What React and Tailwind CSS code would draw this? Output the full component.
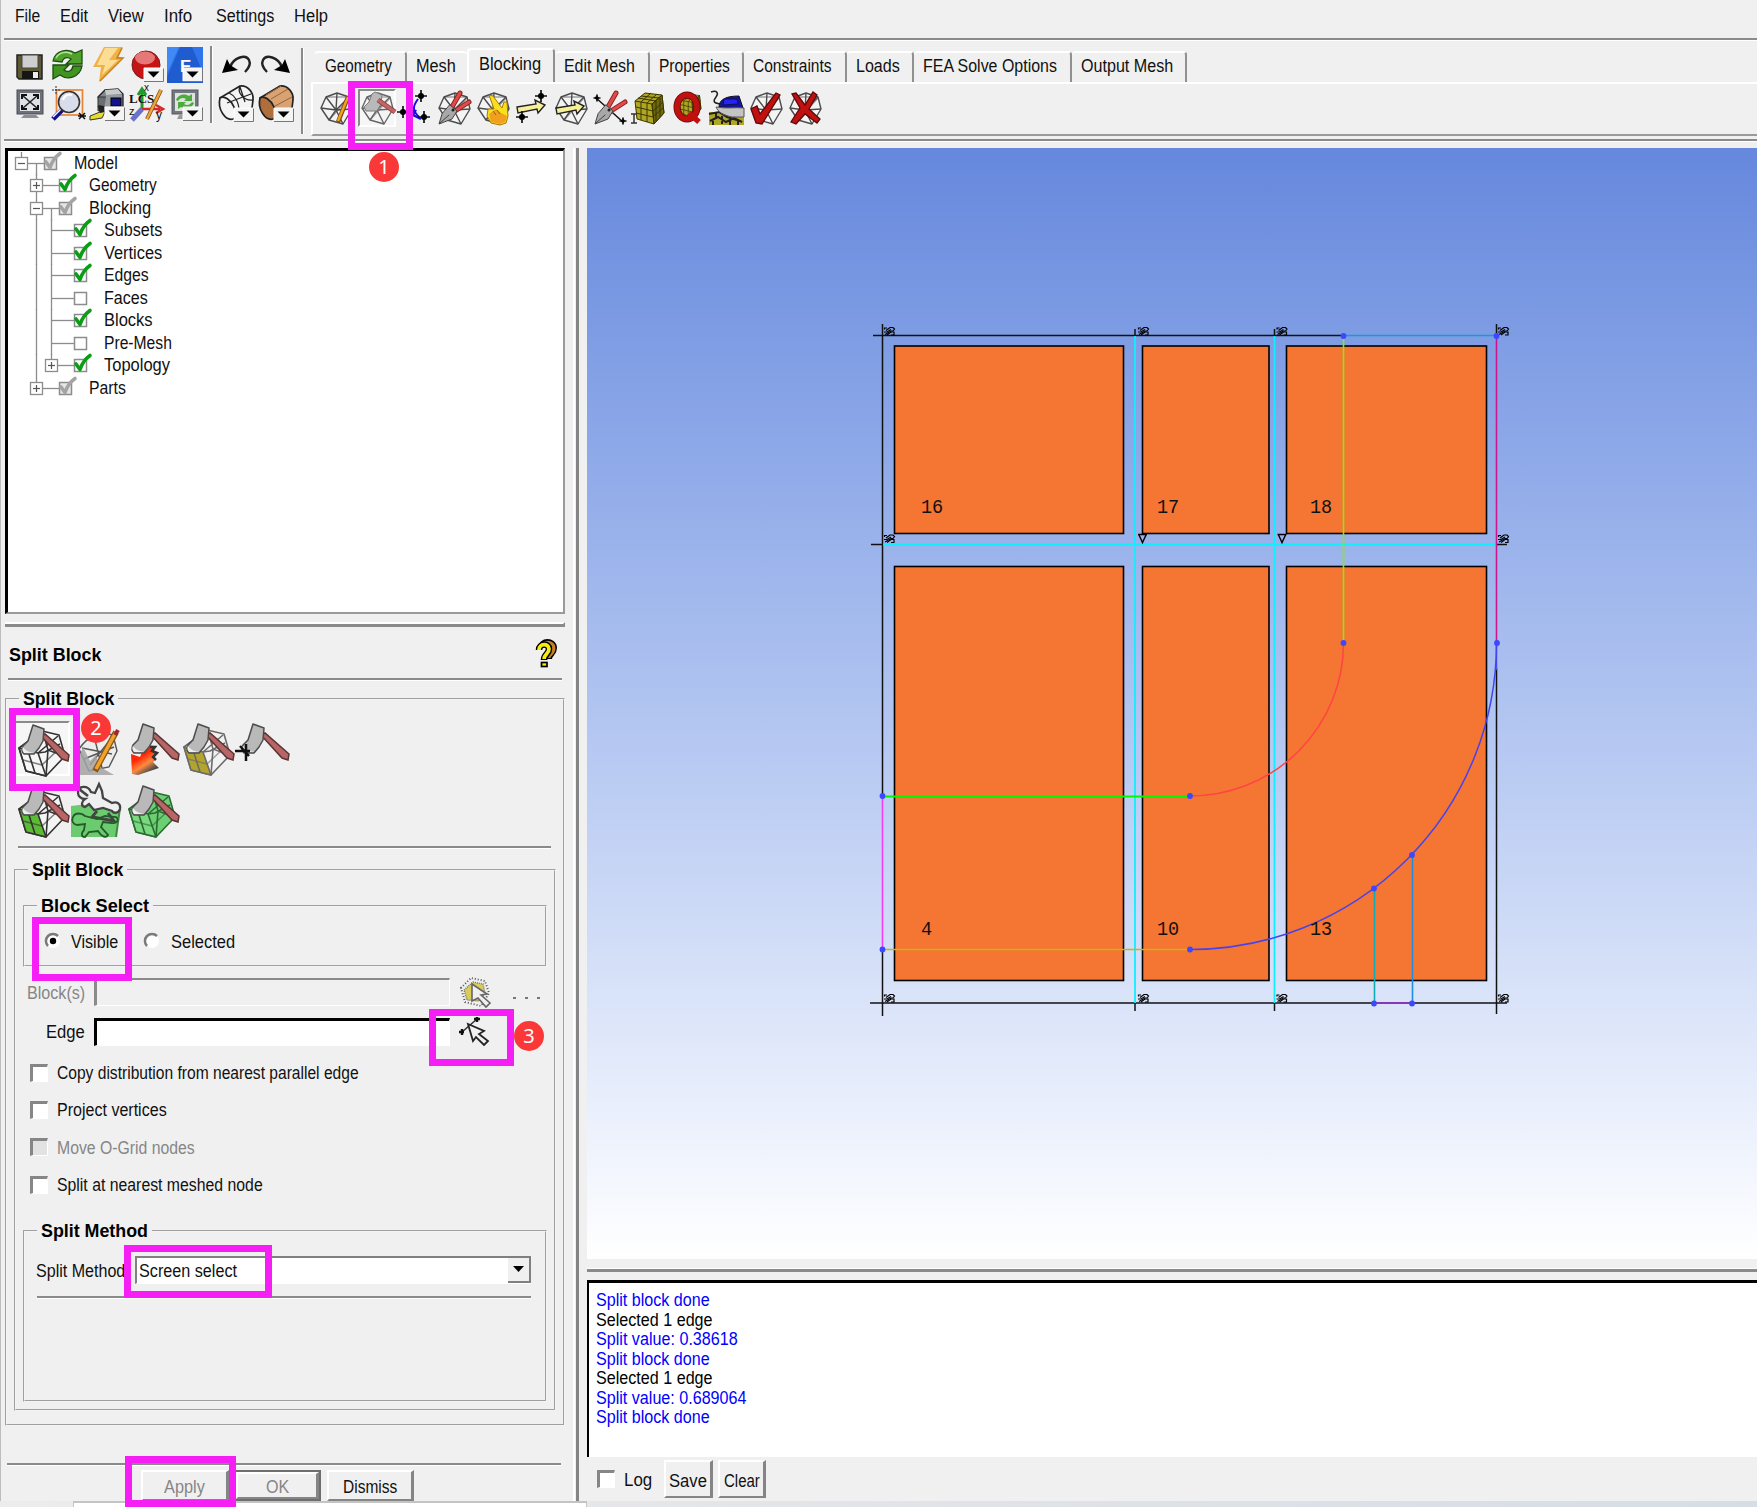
import React, { useLayoutEffect, useRef, useState } from "react";

/* Text squeezed horizontally to the narrow proportions of the UI face. */
function Fit({ w, dy = 1, children, className = "" }) {
  const ref = useRef(null);
  const [scale, setScale] = useState(1);
  useLayoutEffect(() => {
    const natural = ref.current.offsetWidth;
    if (natural) setScale(w / natural);
  }, [w, children]);
  return (
    <span className="inline-block shrink-0 leading-none" style={{ width: w }}>
      <span
        ref={ref}
        className={"inline-block origin-left whitespace-nowrap leading-none " + className}
        style={{ transform: `translateY(${dy}px) scaleX(${scale})` }}
      >
        {children}
      </span>
    </span>
  );
}

function Rule({ className = "" }) {
  return <div className={"h-[3px] shrink-0 border-t-2 border-b border-t-[#8a8a8a] border-b-white " + className} />;
}

function Svg({ w, h, children, className = "" }) {
  return (
    <svg width={w} height={h} viewBox={`0 0 ${w} ${h}`} className={"block shrink-0 overflow-visible " + className} fill="none">
      {children}
    </svg>
  );
}

/* ---------- main toolbar icons, 36 x 36 ---------- */

function Drop({ x = 16, y = 21 }) {
  return (
    <g>
      <rect x={x} y={y} width="19" height="13" fill="#f4f4f4" />
      <path d={`M${x} ${y + 13.5}h19.5v-13`} stroke="#777" />
      <path d={`M${x} ${y + 13}v-13h19`} stroke="#fff" />
      <path d={`M${x + 3.5} ${y + 3.5}h12l-6 6z`} fill="#000" />
    </g>
  );
}

const SaveIcon = () => (
  <Svg w={36} h={36}>
    <path d="M6 8h25v24H8l-2-2z" fill="#5d5a33" stroke="#222" strokeWidth="1.5" />
    <rect x="11" y="8" width="16" height="13" fill="#cfcfcf" stroke="#444" />
    <rect x="11" y="24" width="17" height="8" fill="#151515" />
    <rect x="22" y="25" width="5" height="6" fill="#eee" />
  </Svg>
);
const RefreshIcon = () => (
  <Svg w={36} h={36}>
    <path d="M3 14C5 3 18 1 25 6l7-3v14H16l5-5c-4-3-8-1-9 3z" fill="#4fa32b" stroke="#1d4d10" strokeWidth="1.3" />
    <path d="M32 19C30 30 18 34 10 28l-7 4V18h16l-5 5c4 3 8 1 9-4z" fill="#3f9422" stroke="#1d4d10" strokeWidth="1.3" />
    <path d="M6 11C9 5 17 4 22 7" stroke="#b6e79a" strokeWidth="1.5" />
  </Svg>
);
const BoltIcon = () => (
  <Svg w={36} h={36}>
    <path d="M15 0h19l-5 10h5L10 35l2-15H4z" fill="#efb244" />
    <path d="M16 1h13l-9 12h9L13 28l3-10H8z" fill="#fbdd95" />
    <path d="M33 1l-5 10h6L11 34" stroke="#c87f1c" strokeWidth="1.5" />
  </Svg>
);
const StopIcon = () => (
  <Svg w={36} h={36}>
    <circle cx="18" cy="18" r="14" fill="#c41414" stroke="#7d1a1a" />
    <ellipse cx="17" cy="11" rx="10" ry="6.5" fill="#e87878" />
    <Drop />
  </Svg>
);
const EIcon = () => (
  <Svg w={36} h={36}>
    <rect width="36" height="36" fill="#2f74ea" />
    <path d="M13 0h12l11 26v10H0V30z" fill="#1f5cd0" />
    <path d="M0 0h12L0 26z" fill="#4189f5" />
    <text x="13" y="25" fontSize="17" fontWeight="bold" fill="#fff" fontFamily="Liberation Sans, sans-serif">E</text>
    <Drop />
  </Svg>
);
const FitIcon = () => (
  <Svg w={36} h={36}>
    <rect x="6" y="4" width="26" height="24" fill="#6c7078" stroke="#4a4d52" />
    <rect x="9" y="7" width="20" height="18" fill="#dfe2e6" />
    <path d="M12 10l14 12M26 10L12 22" stroke="#222" strokeWidth="1.600" />
    <path d="M11 13V9h5M22 9h5v4M27 19v4h-5M16 23h-5v-4" stroke="#111" strokeWidth="2" />
    <path d="M13 29h12l3 3H10z" fill="#8b8d90" />
  </Svg>
);
const ZoomIcon = () => (
  <Svg w={36} h={36}>
    <rect x="6.500" y="4" width="26" height="25" stroke="#e98436" strokeWidth="1.7" />
    <path d="M2 4h9M6 0v8" stroke="#333" strokeDasharray="2 1" />
    <path d="M12 24L3 33" stroke="#10108c" strokeWidth="5" />
    <path d="M11 23L3 31" stroke="#fff" strokeWidth="1.5" />
    <circle cx="19" cy="16" r="10.500" fill="#d9dcea" stroke="#333" strokeWidth="1.6" />
    <path d="M13 14c1-5 6-6 9-5" stroke="#fff" strokeWidth="2" />
    <path d="M29 27l6 6M35 27l-6 6M28 30h8" stroke="#111" strokeWidth="1.5" />
  </Svg>
);
const CameraIcon = () => (
  <Svg w={36} h={36}>
    <path d="M9 11l7-7 13-1 5 5v18H14z" fill="#85898e" stroke="#222" strokeWidth="1.3" />
    <path d="M16 4l13-1 4 5-16 1z" fill="#c7cacd" />
    <path d="M9 11h8v11l-8 3z" fill="#6a6d71" stroke="#333" />
    <path d="M17 9h16v16H15z" fill="#979a9e" />
    <rect x="22" y="12" width="10" height="8" fill="#12128a" stroke="#000" />
    <path d="M9 20l2 6-10 4v4l12-2 3-6" fill="#e6de26" stroke="#333" />
    <path d="M9 19l6 1 1 6-5 1z" fill="#222" />
    <Drop />
  </Svg>
);
const LcsIcon = () => (
  <Svg w={36} h={36}>
    <path d="M14 24V4M10 9l4-6 4 6" stroke="#1f9a2b" strokeWidth="3" />
    <path d="M14 23h18M28 19l7 4-7 4" stroke="#d02a2a" strokeWidth="2.500" />
    <path d="M14 23L4 34" stroke="#6b72c9" strokeWidth="5" />
    <path d="M33 4L19 33" stroke="#7a4a10" strokeWidth="4" />
    <path d="M33 4L19 33" stroke="#f0a63a" strokeWidth="2.500" />
    <text x="1" y="17" fontSize="13" fontWeight="bold" fill="#111" fontFamily="Liberation Serif, serif">LCS</text>
    <text x="16" y="5" fontSize="10" fill="#111" fontFamily="Liberation Sans, sans-serif">x</text>
    <text x="1" y="29" fontSize="11" fill="#111" fontFamily="Liberation Sans, sans-serif">z</text>
    <text x="28" y="33" fontSize="12" fill="#111" fontFamily="Liberation Sans, sans-serif">y</text>
  </Svg>
);
const MonitorIcon = () => (
  <Svg w={36} h={36}>
    <rect x="5" y="4" width="26" height="24" fill="#73777e" stroke="#55585d" />
    <rect x="8" y="7" width="20" height="18" fill="#dfe3e0" />
    <path d="M9 14c3-7 10-6 13-4l3-2v7h-8l2-2c-3-2-6-1-8 2zM27 17c-3 7-10 6-13 4l-3 2v-7h8l-2 2c3 2 6 1 8-2z" fill="#4dab3e" />
    <path d="M12 29h10l2 4H10z" fill="#999" />
    <Drop />
  </Svg>
);
const UndoIcon = ({ flip }) => (
  <Svg w={36} h={36}>
    <g transform={flip ? "translate(34 0) scale(-1 1)" : undefined}>
      <path d="M11 20C15 10 27 7 30 13c2 4 0 8-4 12" stroke="#222" strokeWidth="2.400" />
      <path d="M3 26l5-14 3 6 8 5z" fill="#000" />
    </g>
  </Svg>
);
const CylinderIcon = ({ solid }) => (
  <Svg w={36} h={36}>
    <path d="M1 12L21 0c7-1 14 6 13 14l-1 8-17 12z" fill={solid ? "#d9a273" : "#f4f4f4"} stroke="#222" strokeWidth="1.700" strokeLinejoin="round" />
    <path d="M1 12c4-3 11 2 14 9 3 6 2 12-1 12C7 35-2 24 1 12z" fill={solid ? "#b06e3c" : "#f4f4f4"} stroke="#222" strokeWidth="1.700" />
    {solid ? (
      <path d="M7 9L22 0M12 13L29 3M16 20l17-9" stroke="#9a6436" />
    ) : (
      <path d="M21 0c-3 6 3 15 13 14M10 7c5 2 10 8 10 18M8 17l24-9M21 1l5 15" stroke="#222" strokeWidth="1.3" />
    )}
    <Drop x={15} y={22} />
  </Svg>
);

/* ---------- blocking tab icons, 36 x 38 ---------- */

const Wire = ({ c = "#4c4c4c" }) => (
  <g stroke={c} strokeWidth="1.4" strokeLinejoin="round">
    <path d="M7 8L18 4l12 4 3 12-9 15-14-4L2 19z" fill="#f4f4f4" />
    <path d="M2 19l15 2L7 8M17 21L30 8M17 21l7 14M17 21l-7 10M33 20l-16 1M18 4l-1 17" />
    <path d="M7 8l23 0M10 31l20-22" opacity=".5" />
  </g>
);
const Star = ({ x, y, s = 6 }) => (
  <g>
    <path d={`M${x - s} ${y}h${2 * s}M${x} ${y - s}v${2 * s}`} stroke="#111" strokeWidth="1.7" />
    <circle cx={x} cy={y} r={s * 0.5} fill="#000" />
  </g>
);
const Pliers = () => (
  <g strokeLinecap="round">
    <path d="M15 18L23 4" stroke="#8f2020" strokeWidth="5" />
    <path d="M15 18L23 4" stroke="#e24a4a" strokeWidth="3" />
    <path d="M18 22l14-9" stroke="#8f2020" strokeWidth="5" />
    <path d="M18 22l14-9" stroke="#e24a4a" strokeWidth="3" />
    <path d="M13 16l7 6-5 8-13 5 3-10z" fill="#a8a8a8" stroke="#444" />
    <path d="M3 34l9-8" stroke="#444" />
    <circle cx="16" cy="21" r="1.500" fill="#222" />
  </g>
);
const Arrow = ({ y = 0 }) => (
  <path d={`M2 ${16 + y}l19-3-1-4 10 5-7 8-1-4-19 4z`} fill="#f6f09a" stroke="#222" strokeWidth="1.4" />
);
const Mesh = ({ s }) => (
  <g stroke="#3b3700" strokeWidth="1" transform={s}>
    <path d="M3 12l10-8 17 2 2 18-10 11-17-5z" fill="#b0a624" />
    <path d="M20 15L30 6l2 18-10 11z" fill="#6f680f" />
    <path d="M3 12l17 3L30 6M20 15l2 20M9 13v18M15 14v19M4 18l17 4 10-9M4 24l17 4 11-10M24 12v20M28 9v19M9 7l18 2M6 9l18 3M19 4L9 13M25 5l-10 9" />
  </g>
);

const tabIcons = [
  <Svg w={36} h={38}><Wire /><path d="M29 8L19 33" stroke="#7a4a10" strokeWidth="4.500" /><path d="M29 8L19 32" stroke="#f3a21c" strokeWidth="2.500" /></Svg>,
  <Svg w={36} h={38} className="-mt-[2px]">
    <Wire c="#666" />
    <path d="M12 5l3-2 7 3-1 9-4 7H6l-2-4 5-5z" fill="#b9b9b9" stroke="#7a7a7a" />
    <path d="M18 11l17 12" stroke="#8d4a4a" strokeWidth="5" />
    <path d="M18 11l17 12" stroke="#c96464" strokeWidth="3" />
  </Svg>,
  <Svg w={36} h={38}>
    <path d="M20 10c-6 8-5 12 1 18" stroke="#1010e0" strokeWidth="2" />
    <path d="M8 21l9 1-2 4 8 4" stroke="#1010e0" strokeWidth="2.500" />
    <Star x={23} y={7} /><Star x={26} y={28} /><Star x={5} y={23} />
  </Svg>,
  <Svg w={36} h={38}><Wire /><Pliers /></Svg>,
  <Svg w={36} h={38}>
    <Wire />
    <path d="M13 6l4 1 9 12 2-6h3l1 14-2 7-6 2-9-2-4-7 1-7h6z" fill="#f8e01e" stroke="#a87800" />
    <path d="M13 25l7-5 5 4 6 3-2 6-5 2-9-2z" fill="#f0a01e" />
    <path d="M17 22l3 4M21 21l3 4" stroke="#9c6408" />
  </Svg>,
  <Svg w={36} h={38}><Arrow y={2} /><Star x={26} y={7} /><Star x={7} y={28} /></Svg>,
  <Svg w={36} h={38}><Wire /><Arrow y={3} /></Svg>,
  <Svg w={36} h={38}><path d="M2 8l28 25" stroke="#111" strokeWidth="1.500" /><Star x={4} y={9} s={3.5} /><Star x={30} y={32} s={3.5} /><Pliers /></Svg>,
  <Svg w={36} h={38}><Mesh /><path d="M-1 25h6M2 25v9M-1 34h6" stroke="#333" strokeWidth="1.500" /></Svg>,
  <Svg w={36} h={38}><Mesh s="translate(6 2) scale(.75)" /><ellipse cx="16" cy="18" rx="10" ry="12" stroke="#5e0808" strokeWidth="7" /><ellipse cx="16" cy="18" rx="10" ry="12" stroke="#c01010" strokeWidth="5.500" /><path d="M18 24l10 9" stroke="#c01010" strokeWidth="5.500" /></Svg>,
  <Svg w={36} h={38}>
    <path d="M-1 23h28l7 5v8H-1z" fill="#b0a624" />
    <path d="M-1 25l10-2 8 5 10 3M0 32l8-4 8 5 8-4 8 4M6 23v5M3 30v6M12 27v8M20 28v8M28 30v6" stroke="#222" strokeWidth="2" />
    <path d="M1 3c6-2 8 1 5 5s-3 6 4 7" stroke="#222" strokeWidth="1.500" />
    <path d="M9 18c0-8 8-11 20-11l4 12z" fill="#14149c" stroke="#111" />
    <path d="M14 10h13l1 5-15 1z" fill="#2424f4" stroke="#101050" />
    <path d="M6 18c10 2 19 0 28 1v9H22C13 26 8 23 6 18z" fill="#c4c4c4" stroke="#555" />
  </Svg>,
  <Svg w={36} h={38}><Wire /><path d="M2 20l6-3 3 8L27 4l4 2-18 29-6-1z" fill="#c01010" stroke="#5e0808" strokeWidth="1.300" /></Svg>,
  <Svg w={36} h={38}><Wire /><path d="M4 5l4-1 9 12 8-13 4 3-8 14 11 10-3 4-12-9-9 10-5-2 9-14z" fill="#c01010" stroke="#5e0808" strokeWidth="1.300" /></Svg>,
];

/* ---------- split block tool icons, 55 x 56 ---------- */

const Axe = () => (
  <g>
    <path d="M26 14l4-2 24 21-1 6-6-2z" fill="#b76565" stroke="#5a3434" strokeWidth="1.500" />
    <path d="M18 3l11 4-1 12-4 7-5 6H9c-3-3-2-6-1-8l5-5z" fill="#b9b9b9" stroke="#4c4c4c" strokeWidth="1.500" strokeLinejoin="round" />
    <path d="M9 31c-2-2-2-5-1-6 2 3 5 5 11 6z" fill="#ededed" />
  </g>
);
const Cube = ({ fill = "none", front = "none", c = "#333" }) => (
  <g stroke={c} strokeWidth="1.600" strokeLinejoin="round">
    <path d="M4 26l7 23 20 5 19-20-6-21-17-4z" fill={fill} />
    <path d="M4 26l19 5 8 23-20-5z" fill={front} />
    <path d="M13 29l7 22M23 31l20-17M23 31l7-1 15-8M28 10l5 18 16 6M33 28L31 54" />
    <path d="M8 38l19 5 19-18" opacity=".6" />
  </g>
);

const toolIcons = {
  wire: <Svg w={55} h={56} className="-mt-[1px]"><Cube fill="#f6f6f6" /><Axe /></Svg>,
  pencil: (
    <Svg w={55} h={56}>
      <path d="M9 28c8-12 20-18 34-14l4 16-8 16-20 4z" fill="#ededed" stroke="#555" strokeWidth="1.400" />
      <path d="M12 27l30 6M24 15l8 32M44 14L20 44M14 38l30-12" stroke="#555" strokeWidth="1.400" />
      <path d="M9 54V36l4-10 7 14 6-6 4 12 14 8z" fill="#a3a3a3" opacity=".85" />
      <path d="M46 11L25 50" stroke="#8a5414" strokeWidth="6" />
      <path d="M46 11L26 48" stroke="#f2a32b" strokeWidth="3.500" />
      <path d="M48 9l-3 5" stroke="#a02a2a" strokeWidth="4" />
    </Svg>
  ),
  arrow: (
    <Svg w={55} h={56}>
      <defs>
        <linearGradient id="heat" x1="0" y1="0" x2=".6" y2="1">
          <stop offset="0" stopColor="#ff1800" />
          <stop offset=".45" stopColor="#ff2a08" />
          <stop offset=".7" stopColor="#ff8a40" />
          <stop offset=".95" stopColor="#4a4a4a" />
        </linearGradient>
      </defs>
      <path d="M20 24l10 1-2 4 4 2-4 4 3 3-3 3 6 6-21 7-6-1-1-20 9 3z" fill="url(#heat)" />
      <path d="M25 26l5 0-3 4 5 2-4 4 3 3" stroke="#333" strokeWidth="2.500" />
      <Axe />
    </Svg>
  ),
  olive: <Svg w={55} h={56}><Cube fill="#f2f2f2" front="#b3a52c" c="#6b6b6b" /><Axe /></Svg>,
  point: <Svg w={55} h={56}><Axe /><path d="M0 30h15M11 23v17M5 25l9 10" stroke="#111" strokeWidth="2.500" /></Svg>,
  green: <Svg w={55} h={56} className="-ml-[1px]"><Cube fill="#f4f4f4" front="#5cbb35" /><Axe /></Svg>,
  cookie: (
    <Svg w={55} h={56}>
      <path d="M1 23l8-1h38l3 4-4 28H1z" fill="#6bcb6f" />
      <path d="M47 22l3 3-4 29" stroke="#3e8b42" strokeWidth="2" />
      <path d="M8 10c0-8 10-8 13-1l4 1 4-9 3 7 1 7 9 5c5-2 9 1 8 6-1 4-6 5-8 2l-9-3-9 2-5-6-4 3c-5-1-3-6 0-8-4 0-7-3-7-6z" fill="#efefef" stroke="#444" strokeWidth="2.300" />
      <path d="M9 6l9 7M38 30l6 8-16-3-6-1 5-6" stroke="#444" strokeWidth="2.800" />
      <path d="M3 34c2-5 9-4 12-1l12 3 8-3 11 1c4 3 0 7-4 6l-9-1-2 5 7 8c-2 4-7 1-10-4l-9 1-4 5c-4 0-4-4-1-7l1-6-8 1c-4-1-6-4-4-8z" stroke="#245c28" strokeWidth="1.800" />
    </Svg>
  ),
  solid: <Svg w={55} h={56}><Cube fill="#6ccf72" front="#79d97e" c="#2c6a33" /><Axe /></Svg>,
};

/* ---------- model tree ---------- */

const GRAY = "#8c8c8c";

function Toggle({ x, open }) {
  return (
    <g>
      <rect x={x - 6} y="5.500" width="12" height="12" fill="#fff" stroke={GRAY} strokeWidth="1.3" />
      <path d={`M${x - 3.5} 11.500h7`} stroke="#555" strokeWidth="1.2" />
      {!open && <path d={`M${x} 8v7`} stroke="#555" strokeWidth="1.2" />}
    </g>
  );
}

function TreeRow({ depth, name, w, box, check, lines = [], last }) {
  const bx = 36 + depth * 15;
  const tx = 13.5 + depth * 15;
  return (
    <div className="flex h-[22.5px] items-center">
      <Svg w={bx + 30} h={23}>
        {lines.map((x, i) => (
          <path key={i} d={`M${x} 0v23`} stroke={GRAY} strokeWidth="1.300" />
        ))}
        {last && <path d={`M${last} 0v12`} stroke={GRAY} strokeWidth="1.300" />}
        <path d={`M${tx} 11.500H${bx}`} stroke={GRAY} strokeWidth="1.300" />
        {box === "open" && <path d={`M${tx + 15} 11.500v12`} stroke={GRAY} strokeWidth="1.300" />}
        {box && <Toggle x={tx} open={box === "open"} />}
        <rect x={bx + 0.5} y="5.500" width="12" height="12" fill={check === "part" ? "#e6e6e6" : "#fff"} stroke={GRAY} strokeWidth="1.5" />
        {check && (
          <path
            d={`M${bx + 2} 10l4 5.500q3-9 10-14`}
            stroke={check === "on" ? "#0b9d16" : "#a4a4a4"}
            strokeWidth="3.600"
            strokeLinecap="round"
            strokeLinejoin="round"
          />
        )}
      </Svg>
      <Fit w={w} dy={0}>{name}</Fit>
    </div>
  );
}

function Tree() {
  return (
    <div className="mt-[5px] h-[466px] w-[560px] shrink-0 border-t-[3px] border-r-2 border-b-2 border-l-[3px] border-t-black border-r-[#9a9a9a] border-b-[#9a9a9a] border-l-black bg-white pt-[1px]">
      <TreeRow depth={0} name="Model" w={44} box="open" check="part" last={13.5} />
      <TreeRow depth={1} name="Geometry" w={68} box="closed" check="on" lines={[28.5]} />
      <TreeRow depth={1} name="Blocking" w={62} box="open" check="part" lines={[28.5]} />
      <TreeRow depth={2} name="Subsets" w={58} check="on" lines={[28.5, 43.5]} />
      <TreeRow depth={2} name="Vertices" w={58} check="on" lines={[28.5, 43.5]} />
      <TreeRow depth={2} name="Edges" w={45} check="on" lines={[28.5, 43.5]} />
      <TreeRow depth={2} name="Faces" w={44} lines={[28.5, 43.5]} />
      <TreeRow depth={2} name="Blocks" w={49} check="on" lines={[28.5, 43.5]} />
      <TreeRow depth={2} name="Pre-Mesh" w={68} lines={[28.5, 43.5]} />
      <TreeRow depth={2} name="Topology" w={66} box="closed" check="on" lines={[28.5]} last={43.5} />
      <TreeRow depth={1} name="Parts" w={37} box="closed" check="part" last={28.5} />
    </div>
  );
}

/* ---------- form controls ---------- */

function Group({ title, w, className, children }) {
  return (
    <fieldset className={"shrink-0 border-2 border-[#f4f4f4] [border-style:groove] " + className}>
      <legend className="ml-[12px] flex h-5 items-center px-1">
        <Fit w={w} className="font-bold text-black">{title}</Fit>
      </legend>
      {children}
    </fieldset>
  );
}

function Box({ disabled }) {
  return (
    <span
      className={
        "block size-[18px] shrink-0 border-t-[3px] border-r border-b border-l-[3px] border-t-[#868686] border-r-white border-b-white border-l-[#868686] " +
        (disabled ? "bg-[#e2e2e2]" : "bg-white")
      }
    />
  );
}

function Check({ label, w, disabled }) {
  return (
    <div className="flex h-[37.4px] items-center">
      <Box disabled={disabled} />
      <span className={"ml-[9px] flex items-center " + (disabled ? "text-[#868686]" : "")}>
        <Fit w={w}>{label}</Fit>
      </span>
    </div>
  );
}

function Radio({ on }) {
  return (
    <Svg w={16} h={18} className="relative -top-[1px]">
      <circle cx="8" cy="9" r="7" fill="#fff" />
      <path d="M3 14A7 7 0 0 1 13 4" stroke="#7a7a7a" strokeWidth="2.500" />
      {on && <circle cx="8" cy="9" r="3.200" fill="#000" />}
    </Svg>
  );
}

function Button({ label, w, dy, className }) {
  return (
    <button
      type="button"
      className={"flex shrink-0 items-center justify-center border-t-2 border-r-[3px] border-b-2 border-l-2 border-t-white border-r-[#858585] border-b-[#858585] border-l-white " + className}
    >
      <Fit w={w} dy={dy}>{label}</Fit>
    </button>
  );
}

/* ---------- panels ---------- */

const tabs = [
  ["Geometry", 67, "w-[93px] pl-[11px]"],
  ["Mesh", 40, "w-[60px] pl-[9px]"],
  ["Blocking", 62, "w-[88px] pl-[10px]"],
  ["Edit Mesh", 71, "w-[95px] pl-[9px]"],
  ["Properties", 71, "w-[94px] pl-[9px]"],
  ["Constraints", 79, "w-[103px] pl-[9px]"],
  ["Loads", 44, "w-[67px] pl-[9px]"],
  ["FEA Solve Options", 134, "w-[158px] pl-[9px]"],
  ["Output Mesh", 92, "w-[115px] pl-[9px]"],
];

function Tabs() {
  return (
    <div className="ml-[8px] flex flex-1 flex-col pt-[7px]">
      <div className="ml-[3px] flex h-[34px] items-end">
        {tabs.map(([name, w, cls]) => {
          const active = name === "Blocking";
          return (
            <div
              key={name}
              className={
                "flex shrink-0 items-center rounded-t-[4px] border-t-2 border-t-white " +
                cls +
                (active ? " h-[34px] border-r-2 border-l-2 border-r-[#909090] border-l-white pb-[4px]" : " h-[31px] pb-[3px]") +
                (name === "Mesh" ? "" : " border-r-2 border-r-[#909090]")
              }
            >
              <Fit w={w}>{name}</Fit>
            </div>
          );
        })}
      </div>
      <div className="flex h-[54px] items-center gap-[3px] border-t-2 border-b-2 border-l-2 border-t-white border-b-[#9a9a9a] border-l-white pb-[2px] pl-[6px]">
        {tabIcons.map((icon, i) => (
          <div
            key={i}
            className={
              i === 1
                ? "-mr-[1px] flex h-[38px] w-[38px] shrink-0 border-t-2 border-r-2 border-b-2 border-l-2 border-t-[#8a8a8a] border-r-white border-b-white border-l-[#8a8a8a] bg-[#f6f6f6]"
                : "w-[36px] shrink-0"
            }
          >
            {icon}
          </div>
        ))}
      </div>
    </div>
  );
}

const menus = [
  ["File", 25, "ml-[15px]"],
  ["Edit", 28, "ml-[20px]"],
  ["View", 36, "ml-[20px]"],
  ["Info", 28, "ml-[20px]"],
  ["Settings", 58, "ml-[24px]"],
  ["Help", 34, "ml-[20px]"],
];

function Header() {
  return (
    <div className="flex h-[142px] shrink-0 flex-col">
      <div className="flex h-[38px] shrink-0 items-center pb-[7px]">
        {menus.map(([name, w, cls]) => (
          <div key={name} className={"flex " + cls}>
            <Fit w={w}>{name}</Fit>
          </div>
        ))}
      </div>
      <Rule className="ml-[4px]" />
      <div className="flex h-[98px] shrink-0">
        <div className="ml-[11px] grid grid-cols-[repeat(5,39px)] content-start gap-y-[3px] pt-[6px]">
          <SaveIcon /><RefreshIcon /><BoltIcon /><StopIcon /><EIcon />
          <FitIcon /><ZoomIcon /><CameraIcon /><LcsIcon /><MonitorIcon />
        </div>
        <div className="mt-[5px] ml-[4px] h-[77px] w-[3px] border-r border-l-2 border-l-[#8a8a8a] border-r-white" />
        <div className="ml-[6px] grid grid-cols-[repeat(2,40px)] content-start gap-y-[3px] pt-[6px]">
          <UndoIcon /><UndoIcon flip />
          <CylinderIcon /><CylinderIcon solid />
        </div>
        <div className="mt-[7px] ml-[2px] h-[86px] w-[3px] border-r border-l-2 border-l-[#8a8a8a] border-r-white" />
        <div className="-ml-[1px] flex flex-1"><Tabs /></div>
      </div>
      <Rule className="ml-[4px]" />
    </div>
  );
}

function HelpMark() {
  return (
    <Svg w={20} h={28}>
      <path d="M5 8c0-8 13-8 13 0 0 6-5 6-5 11" stroke="#000" strokeWidth="6" />
      <path d="M6 8c0-7 11.500-7 11.500 0 0 6-5 6-5 10" stroke="#c57f2a" strokeWidth="4" />
      <path d="M3 10c0-7 10-7 10-1 0 5-5 5-5 11" stroke="#000" strokeWidth="6.500" />
      <path d="M3 10c0-7 10-7 10-1 0 5-5 5-5 10" stroke="#f4ee10" strokeWidth="3.800" />
      <rect x="5.500" y="22.500" width="5.500" height="4" fill="#f4ee10" stroke="#000" strokeWidth="1.700" />
    </Svg>
  );
}

function BlockPick() {
  return (
    <Svg w={34} h={32}>
      <path d="M2 12L12 2l14 3 4 12-8 13-16-4z" stroke="#555" strokeWidth="2" strokeDasharray="1 2" />
      <path d="M5 14l9-8 10 2 2 9-6 8-12-1z" fill="#d9cc5c" stroke="#777" strokeWidth="1.500" strokeDasharray="1 1" />
      <path d="M13 8l15 10-6 1 9 8-4 4-8-9-6 3z" fill="#f0f0f0" stroke="#666" strokeWidth="1.600" />
    </Svg>
  );
}

function EdgePick() {
  return (
    <Svg w={34} h={30}>
      <path d="M3 15L18 2" stroke="#333" strokeWidth="1.600" />
      <path d="M0 15h5M3 12v6M15 2h6M18 0v5" stroke="#111" strokeWidth="2.400" />
      <path d="M9 7l16 7-5 3 9 7-4 4-8-8-3 4z" fill="#f0f0f0" stroke="#222" strokeWidth="1.800" />
    </Svg>
  );
}

function LeftPanel() {
  return (
    <div className="flex w-[573px] shrink-0 flex-col pt-[1px] pl-[5px]">
      <Tree />
      <div className="mt-[8px] h-[5px] w-[560px] shrink-0 border-t-2 border-r-2 border-b-[3px] border-t-white border-r-[#8a8a8a] border-b-[#8a8a8a]" />
      <div className="flex h-[51px] w-[560px] shrink-0 items-center pt-[3px] pl-[4px]">
        <Fit w={92} dy={1.5} className="font-bold text-black">Split Block</Fit>
        <div className="mr-[9px] mb-[1px] ml-auto"><HelpMark /></div>
      </div>
      <Rule className="ml-[3px] w-[554px]" />
      <Group title="Split Block" w={91} className="mt-[8px] h-[737px] w-[560px]">
        <div className="mt-[12px] ml-[8px] flex h-[56px]">
          <div className="h-[55px] w-[55px] border-t-2 border-r-2 border-b-2 border-t-[#8a8a8a] border-r-white border-b-white bg-[#f6f6f6]">{toolIcons.wire}</div>
          {toolIcons.pencil}
          {toolIcons.arrow}
          {toolIcons.olive}
          {toolIcons.point}
        </div>
        <div className="mt-[6px] ml-[9px] flex h-[56px]">
          {toolIcons.green}
          {toolIcons.cookie}
          {toolIcons.solid}
        </div>
        <Rule className="mt-[7px] ml-[11px] w-[533px]" />
        <Group title="Split Block" w={91} className="mt-[11px] ml-[7px] h-[551px] w-[542px]">
          <Group title="Block Select" w={108} className="mt-[16px] ml-[7px] h-[71px] w-[524px]">
            <div className="ml-[20px] flex h-[50px] items-center pt-[1px]">
              <Radio on />
              <span className="ml-[10px] flex"><Fit w={47} dy={1}>Visible</Fit></span>
              <span className="ml-[26px]"><Radio /></span>
              <span className="ml-[11px] flex"><Fit w={64} dy={1}>Selected</Fit></span>
            </div>
          </Group>
          <div className="mt-[10px] flex h-[30px] items-center text-[#868686]">
            <div className="ml-[11px] flex w-[67px]"><Fit w={58} dy={2}>Block(s)</Fit></div>
            <div className="h-[28px] w-[356px] border-t-2 border-r border-b border-l-[3px] border-t-[#8a8a8a] border-r-white border-b-white border-l-[#8a8a8a]" />
            <div className="ml-[9px]"><BlockPick /></div>
            <div className="ml-[20px] flex gap-[9px] pt-[12px]">
              <i className="h-[2px] w-[3px] bg-[#777]" />
              <i className="h-[2px] w-[3px] bg-[#777]" />
              <i className="h-[2px] w-[3px] bg-[#777]" />
            </div>
          </div>
          <div className="mt-[10px] flex h-[30px] items-center">
            <div className="ml-[30px] flex w-[48px]"><Fit w={39} dy={1}>Edge</Fit></div>
            <div className="h-[28px] w-[356px] border-t-[3px] border-r border-b border-l-[3px] border-t-black border-r-white border-b-white border-l-black bg-white" />
            <div className="ml-[9px]"><EdgePick /></div>
          </div>
          <div className="mt-[7px] ml-[14px]">
            <Check label="Copy distribution from nearest parallel edge" w={302} />
            <Check label="Project vertices" w={110} />
            <Check label="Move O-Grid nodes" w={138} disabled />
            <Check label="Split at nearest meshed node" w={206} />
          </div>
          <Group title="Split Method" w={107} className="mt-[17px] ml-[7px] h-[181px] w-[524px]">
            <div className="mt-[15px] ml-[12px] flex h-[28px] items-center">
              <div className="-ml-[1px] flex w-[99px]"><Fit w={89} dy={1.5}>Split Method</Fit></div>
              <div className="flex h-[28px] w-[396px] items-center border-t-2 border-b border-l-2 border-t-[#808080] border-b-white border-l-[#808080] bg-white pl-[2px]">
                <Fit w={98} dy={1.5}>Screen select</Fit>
                <div className="ml-auto flex h-[25px] w-[23px] items-center justify-center border-r-2 border-b-2 border-[#808080] bg-[#f0f0f0]">
                  <Svg w={11} h={6}><path d="M0 0h11L5.500 6z" fill="#000" /></Svg>
                </div>
              </div>
            </div>
            <Rule className="mt-[12px] ml-[12px] w-[494px]" />
          </Group>
        </Group>
      </Group>
      <Rule className="mt-[37px] ml-[2px] w-[554px]" />
      <div className="mt-[4px] ml-[136px] flex h-[31px]">
        <Button label="Apply" w={41} dy={1.5} className="w-[88px] text-[#868686]" />
        <div className="ml-[7px] flex border-2 border-l-0 border-[#6e6e6e]">
          <Button label="OK" w={23} dy={1.5} className="w-[83px] text-[#868686]" />
        </div>
        <Button label="Dismiss" w={54} dy={1.5} className="ml-[6px] w-[87px]" />
      </div>
    </div>
  );
}

/* ---------- viewport ---------- */

const BLOCKS = [
  [894.5, 346, 229, 187.5], [1142.5, 346, 126.5, 187.5], [1286.5, 346, 200, 187.5],
  [894.5, 566.5, 229, 414], [1142.5, 566.5, 126.5, 414], [1286.5, 566.5, 200, 414],
];
const LABELS = [["16", 921, 512.5], ["17", 1157, 512.5], ["18", 1310, 512.5], ["4", 921, 934.5], ["10", 1157, 934.5], ["13", 1310, 934.5]];
const POINTS = [
  [1343.5, 336], [1496.5, 336], [1343.5, 643], [1497, 643], [882.5, 796], [1190, 796],
  [882.5, 949.5], [1190, 949.5], [1374, 888.5], [1412, 855], [1374, 1003.5], [1412, 1003.5],
];
const SURFACE = [
  [883, 335.5], [1137, 335.5], [1275.5, 335.5], [1497, 335.5], [883, 543], [1497, 543],
  [883, 1002.5], [1137, 1002.5], [1275.5, 1002.5], [1497, 1002.5],
];

function Viewport() {
  return (
    <div className="h-[1111px] shrink-0 overflow-hidden bg-linear-to-b from-[#6688dd] to-white">
      <svg width="1170" height="1111" viewBox="587 148 1170 1111" fill="none" className="block">
        {BLOCKS.map(([x, y, w, h], i) => (
          <rect key={i} x={x} y={y} width={w} height={h} fill="#f57533" stroke="#000" strokeWidth="1.600" />
        ))}
        <path d="M873 335.500H1343M870 1003H1507M882.500 324V796M882.500 950V1016M1496.500 324V335M1496.500 668V1014M871 544.500H882M1135 329v7M1274.500 329v7M1135 1003v8M1274.500 1003v8M1497 544.500h10" stroke="#111" strokeWidth="1.500" />
        <path d="M883 544.500H1497M1135 336V1003M1274.500 336V1003" stroke="#10eeff" strokeWidth="1.800" />
        <path d="M1343.500 335.500H1497" stroke="#10a0d0" strokeWidth="1.600" />
        <path d="M1343.500 336V643" stroke="#84ea10" strokeWidth="1.600" />
        <path d="M1496.500 336V643" stroke="#d0148c" strokeWidth="1.600" />
        <path d="M1496.500 643v27" stroke="#4450ff" strokeWidth="1.500" />
        <path d="M882.500 796.500H1190" stroke="#00f800" strokeWidth="1.800" />
        <path d="M882.500 796V949.500" stroke="#f43cf4" strokeWidth="1.600" />
        <path d="M882.500 949.500H1190" stroke="#c8b414" strokeWidth="1.600" />
        <path d="M1343.500 643A153.500 153 0 0 1 1190 796" stroke="#ff4444" strokeWidth="1.500" />
        <path d="M1496.500 643A306.500 306.500 0 0 1 1190 949.500" stroke="#4444ee" strokeWidth="1.500" />
        <path d="M1374.500 888V1003" stroke="#10acb4" strokeWidth="1.600" />
        <path d="M1412.500 855V1003" stroke="#1e8ee0" strokeWidth="1.600" />
        <path d="M1374 1003h38" stroke="#a030e0" strokeWidth="1.700" />
        {LABELS.map(([t, x, y]) => (
          <text key={t} transform={`translate(${x} ${y}) scale(1 1.1)`} fontSize="18.500" fill="#111" fontFamily="Liberation Mono, monospace">{t}</text>
        ))}
        {SURFACE.map(([x, y], i) => (
          <g key={i} transform={`translate(${x} ${y})`} stroke="#000" strokeWidth="1.200">
            <path d="M1.500 -6v-1.500h2.500M3 -5l4-3h3l1.500 1.500-1.500 2H8L2 -1" />
            <path d="M1 -3.500l3 0 4-2.500M4 -.5l4-3 3 0v3H8" />
          </g>
        ))}
        <path d="M1138 534.500h9M1139 535l3.500 7.500 3.500-7.500M1277.500 534.500h9M1278.500 535l3.500 7.500 3.500-7.500" stroke="#000" strokeWidth="1.400" />
        {POINTS.map(([x, y], i) => (
          <circle key={i} cx={x} cy={y} r="2.900" fill="#3c48ff" />
        ))}
      </svg>
    </div>
  );
}

const LOG = [
  ["Split block done", 114, true],
  ["Selected 1 edge", 117, false],
  ["Split value: 0.38618", 142, true],
  ["Split block done", 114, true],
  ["Selected 1 edge", 117, false],
  ["Split value: 0.689064", 150, true],
  ["Split block done", 114, true],
];

function RightPanel() {
  return (
    <div className="flex flex-1 flex-col pt-[6px]">
      <Viewport />
      <div className="mt-[9px] h-[4px] shrink-0 border-t border-b-[3px] border-t-white border-b-[#8a8a8a]" />
      <div className="mt-[8px] h-[177px] shrink-0 border-t-[3px] border-l-2 border-black bg-white pt-[7px] pl-[7px]">
        {LOG.map(([t, w, blue], i) => (
          <div key={i} className={"flex h-[19.5px] items-center " + (blue ? "text-[#0000ff]" : "text-black")}>
            <Fit w={w} dy={0.5}>{t}</Fit>
          </div>
        ))}
      </div>
      <div className="flex h-[44px] items-center pb-[1px] pl-[10px]">
        <Box />
        <span className="mr-[12px] ml-[9px] flex"><Fit w={28} dy={2}>Log</Fit></span>
        <Button label="Save" w={38} dy={3} className="h-[38px] w-[49px]" />
        <Button label="Clear" w={36} dy={3} className="ml-[5px] h-[38px] w-[48px]" />
      </div>
    </div>
  );
}

/* ---------- tutorial call-outs over the window ---------- */

function Frame({ className }) {
  return <div className={"absolute border-[7px] border-[#f51ef5] " + className} />;
}
function Badge({ n, className }) {
  return (
    <div className={"absolute flex size-[30px] items-center justify-center rounded-full bg-[#fb3838] font-['Noto_Sans',sans-serif] text-[20px] leading-none text-white " + className}>
      {n}
    </div>
  );
}

export default function App() {
  return (
    <div className="relative flex h-[1507px] w-[1757px] flex-col overflow-hidden bg-[#f0f0f0] font-['Liberation_Sans',Arial,sans-serif] text-[17.5px] text-[#111] shadow-[inset_1px_0_0_#bdbdbd]">
      <Header />
      <div className="flex h-[1359px] shrink-0">
        <LeftPanel />
        <div className="mt-[6px] w-[14px] shrink-0">
          <div className="h-full w-[6px] border-r-[3px] border-l-2 border-r-[#858585] border-l-white" />
        </div>
        <RightPanel />
      </div>
      <div className="flex h-[6px] shrink-0 bg-linear-to-r from-[#ececec] to-[#d6dde4]">
        <div className="ml-[73px] w-[514px] border-t-2 border-r border-l border-[#c4c4c4] bg-white" />
      </div>
      <Frame className="top-[81px] left-[348px] h-[69px] w-[65px]" />
      <Frame className="top-[708px] left-[9px] h-[83px] w-[71px]" />
      <Frame className="top-[917px] left-[32px] h-[64px] w-[100px]" />
      <Frame className="top-[1009px] left-[429px] h-[57px] w-[85px]" />
      <Frame className="top-[1245px] left-[124px] h-[53px] w-[148px]" />
      <Frame className="top-[1456px] left-[125px] h-[51px] w-[111px]" />
      <Badge n="1" className="top-[152px] left-[369px]" />
      <Badge n="2" className="top-[713px] left-[81px]" />
      <Badge n="3" className="top-[1021px] left-[514px]" />
    </div>
  );
}
